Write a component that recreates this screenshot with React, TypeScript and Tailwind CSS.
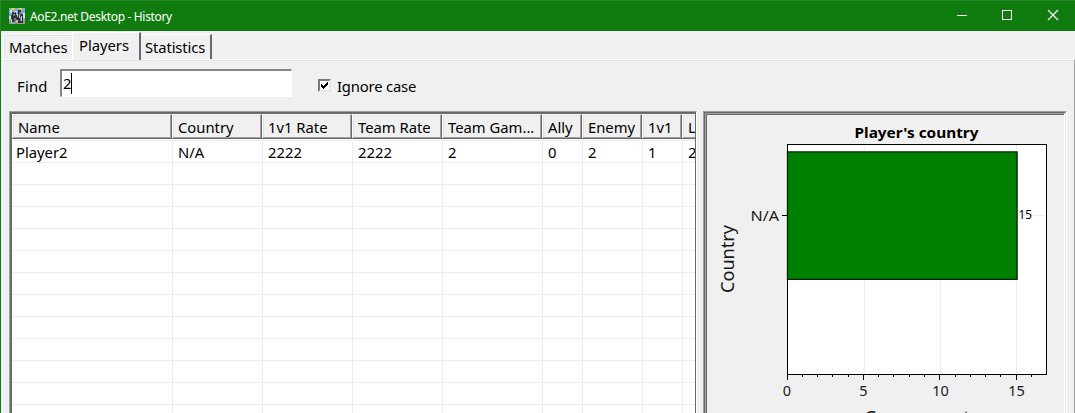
const columns = [
  { name: 'Name', value: 'Player2', head: 'w-[160px] pl-[5px]', cell: 'w-[161px] pl-[4px]' },
  { name: 'Country', value: 'N/A', head: 'w-[90px] pl-[5px]', cell: 'w-[90px] pl-[5px]' },
  { name: '1v1 Rate', value: '2222', head: 'w-[90px] pl-[5px]', cell: 'w-[90px] pl-[5px]' },
  { name: 'Team Rate', value: '2222', head: 'w-[90px] pl-[5px]', cell: 'w-[90px] pl-[5px]' },
  { name: 'Team Gam...', value: '2', head: 'w-[100px] pl-[5px]', cell: 'w-[100px] pl-[5px]' },
  { name: 'Ally', value: '0', head: 'w-[40px] pl-[5px]', cell: 'w-[40px] pl-[5px]' },
  { name: 'Enemy', value: '2', head: 'w-[60px] pl-[5px]', cell: 'w-[60px] pl-[5px]' },
  { name: '1v1', value: '1', head: 'w-[40px] pl-[5px]', cell: 'w-[40px] pl-[5px]' },
  { name: 'L', value: '2', head: 'w-[90px] pl-[5px]', cell: 'w-[90px] pl-[5px]' },
];

const emptyRows = Array.from({ length: 12 }, (_, i) => i);

function AppIcon() {
  return (
    <svg width="16" height="16" viewBox="0 0 16 16" shapeRendering="crispEdges">
      <path fill="#78a8dc" d="M0 0h16v16H0z" />
      <path fill="#f0cc40" d="M2 0h4v2H2zM9 0h4v1H9zM11 1h2v1h-2z" />
      <path fill="#d4e2ee" d="M1 2h2v3H1zM6 3h2v2H6zM14 5h2v5h-2zM0 8h2v3H0zM8 6h1v2H8z" />
      <path fill="#313338" d="M3 4h4v3H3zM9 2h3v4H9zM2 7h6v7H2zM9 6h5v9H9zM7 9h3v4H7z" />
      <path fill="#77736d" d="M4 6h2v2H4zM10 4h2v3h-2zM5 10h2v4H5zM11 9h2v4h-2z" />
      <path fill="#c9c8c2" d="M2 11h1v4H2zM7 12h2v3H7zM12 8h1v5h-1zM5 3h1v2H5zM10 7h1v3h-1z" />
      <path fill="#b59555" d="M0 13h2v3H0zM6 14h3v2H6zM14 13h2v3h-2z" />
    </svg>
  );
}

function TitleBar() {
  return (
    <header className="flex h-[31px] shrink-0 items-center border-t border-l border-[#27862b] bg-[#107c10] pl-2 text-white">
      <AppIcon />
      <h1 className="ml-[5px] grow pt-px text-[12px] leading-[16px] tracking-[-0.33px]">AoE2.net Desktop - History</h1>
      <svg width="136" height="30" viewBox="939 1 136 30" fill="none" stroke="white" shapeRendering="crispEdges">
        <path d="M957 15.5h10M1002.5 10.5h9v9h-9z" />
        <path d="M1048 10l10 10M1058 10l-10 10" shapeRendering="auto" strokeWidth="1.15" />
      </svg>
    </header>
  );
}

function Tabs() {
  return (
    <nav className="flex h-7 shrink-0 items-end pl-[2px] text-[14.8px]">
      <div className="h-[25px] w-[69px] rounded-tl-[2px] border-t border-l border-white pl-[5px] leading-[24px] tracking-[-0.02px] shadow-[inset_1px_1px_#e3e3e3]">Matches</div>
      <div className="relative -mb-px h-[28px] w-[69px] rounded-tl-[2px] border-t border-r-2 border-l border-t-white border-r-[#696969] border-l-white bg-[#f0f0f0] pl-[6px] leading-[24px] tracking-[-0.02px]">Players</div>
      <div className="h-[25px] w-[71px] border-t border-r-2 border-t-white border-r-[#696969] pl-[4px] leading-[24px] tracking-[-0.12px]">Statistics</div>
    </nav>
  );
}

function SearchBar() {
  return (
    <div className="flex h-[50px] shrink-0 items-start pt-[8px] pl-[14px] text-[14.8px]">
      <label className="w-[43px] leading-[34px] tracking-[0.2px]">Find</label>
      <div className="flex h-[28px] w-[232px] items-center border-t-2 border-r border-b border-l-2 border-t-[#858585] border-r-white border-b-white border-l-[#858585] bg-white pl-[1px]">
        <span>2</span>
        <span className="h-[21px] w-px bg-black" />
      </div>
      <label className="ml-[26px] flex h-[35px] items-center">
        <span className="mt-[-2px] grid h-[13px] w-[13px] place-items-center border-2 border-t-[#787878] border-r-[#e8e8e8] border-b-[#e8e8e8] border-l-[#787878] bg-white">
          <svg width="9" height="9" viewBox="0 0 9 9" shapeRendering="crispEdges">
            <path d="M1 3h1v1h1v1h1V4h1V3h1V2h1V1h1v3H7v1H6v1H5v1H4v1H3V7H2V6H1z" />
          </svg>
        </span>
        <span className="ml-[6px] tracking-[-0.17px]">Ignore case</span>
      </label>
    </div>
  );
}

function PlayerTable() {
  return (
    <section className="h-full w-[688px] shrink-0 overflow-hidden border-t border-r border-l border-t-[#a0a0a0] border-r-white border-l-[#a0a0a0]">
      <div className="h-full overflow-hidden border-t-2 border-r border-l-2 border-[#696969] bg-white text-[14.8px]">
        <div className="flex h-[25px] w-max border-b border-[#696969] bg-[#f0f0f0]">
          {columns.map((c, i) => (
            <div key={i} className={`${c.head} h-6 shrink-0 overflow-hidden border-t border-r border-l border-t-white border-r-[#696969] border-l-white leading-[25px] whitespace-nowrap shadow-[inset_-1px_-1px_#a0a0a0,inset_1px_1px_#e3e3e3]`}>{c.name}</div>
          ))}
        </div>
        <div className="mt-px flex h-[23px] w-max border-y border-[#ededed]">
          {columns.map((c, i) => (
            <div key={i} className={`${c.cell} shrink-0 border-r border-[#ededed] leading-[23px]`}>{c.value}</div>
          ))}
        </div>
        {emptyRows.map((row) => (
          <div key={row} className="flex h-[22px] w-max border-b border-[#ededed]">
            {columns.map((c, i) => (
              <div key={i} className={`${c.cell} shrink-0 border-r border-[#ededed]`} />
            ))}
          </div>
        ))}
      </div>
    </section>
  );
}

function CountryChart() {
  const ticks = Array.from({ length: 17 }, (_, i) => i);
  return (
    <section className="ml-[6px] h-full w-[364px] shrink-0 overflow-hidden border-t border-r border-l border-t-[#a0a0a0] border-r-white border-l-[#a0a0a0]">
      <div className="h-full border-t border-r border-l border-t-[#696969] border-r-[#e3e3e3] border-l-[#696969]">
        <div className="h-full border-t border-r border-l border-t-[#a0a0a0] border-r-white border-l-[#a0a0a0]">
          <div className="h-full border-t border-l border-[#696969]">
            <svg width="357" height="298" viewBox="707 115 357 298" shapeRendering="crispEdges" className="block">
              <path fill="white" d="M787 144h260v230H787z" />
              <path stroke="#ededed" d="M864.5 145v229M940.5 145v229M1016.5 145v229M788 215.5h259" />
              <path fill="none" stroke="black" d="M787.5 144.5h259v230h-259z" />
              <path fill="#008000" stroke="#002400" strokeWidth="1.3" shapeRendering="auto" d="M787.5 151.9h229.6v127.4H787.5z" />
              <path stroke="black" d="M782 215.5h6" />
              {ticks.map((n) => (
                <path key={n} stroke="black" d={`M${Math.floor(787 + n * 15.28) + 0.5} 374v${n % 5 ? 3 : 6}`} />
              ))}
              <g shapeRendering="auto">
                <text x="854.5" y="138" fontSize="14.5" fontWeight="700" textLength="124" lengthAdjust="spacingAndGlyphs">Player&apos;s country</text>
                <text x="750.5" y="220.5" fontSize="15" textLength="28.5" lengthAdjust="spacingAndGlyphs" fill="#181818">N/A</text>
                <text x="1018.5" y="219.3" fontSize="12" textLength="13.5" lengthAdjust="spacingAndGlyphs">15</text>
                <text transform="translate(733.5 293) rotate(-90)" fontSize="17.5" textLength="68" lengthAdjust="spacingAndGlyphs" fill="#181818">Country</text>
                <g fontSize="14.5" textAnchor="middle" fill="#181818">
                  <text x="787" y="396">0</text>
                  <text x="863.5" y="396">5</text>
                  <text x="940.5" y="396">10</text>
                  <text x="1016.5" y="396">15</text>
                </g>
                <text x="864.5" y="423.5" fontSize="17.5" textLength="105" lengthAdjust="spacingAndGlyphs" fill="#181818">Games count</text>
              </g>
            </svg>
          </div>
        </div>
      </div>
    </section>
  );
}

export default function App() {
  return (
    <div className="flex h-[413px] w-[1075px] flex-col overflow-hidden bg-[#f0f0f0] font-['Noto_Sans','Open_Sans',sans-serif] text-black">
      <TitleBar />
      <div className="flex min-h-0 grow flex-col border-l border-[#107c10]">
        <Tabs />
        <main className="ml-px flex min-h-0 grow flex-col border-t border-r border-l border-t-white border-r-[#a0a0a0] border-l-white">
          <div className="flex min-h-0 grow flex-col border-t border-[#e3e3e3]">
            <SearchBar />
            <div className="flex min-h-0 grow pl-[6px]">
              <PlayerTable />
              <CountryChart />
            </div>
          </div>
        </main>
      </div>
    </div>
  );
}
